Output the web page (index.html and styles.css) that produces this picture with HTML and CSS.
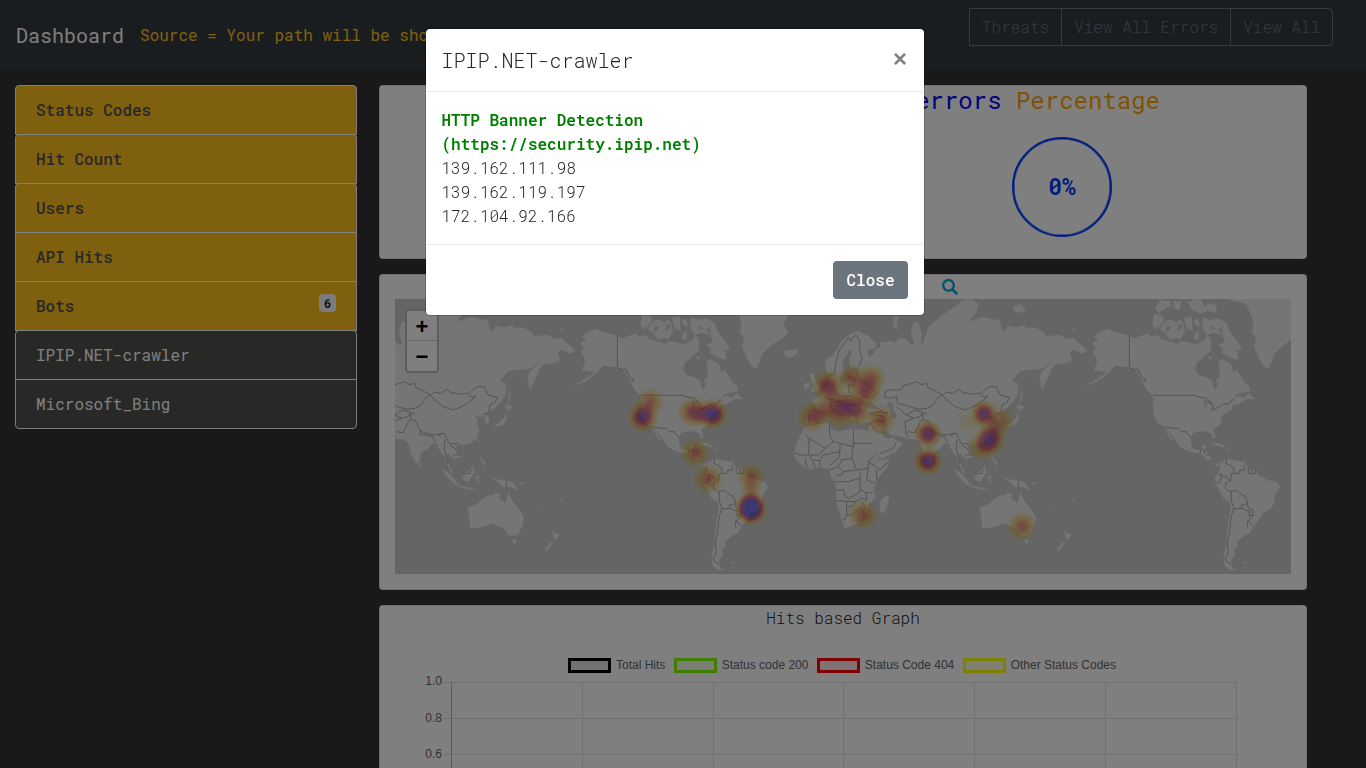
FILE: index.html
```html
<!DOCTYPE html>
<html lang="en">
<head>
<meta charset="utf-8">
<title>Dashboard</title>
<link rel="stylesheet" href="styles.css">
</head>
<body>
<nav class="navbar">
  <span class="brand">Dashboard</span>
  <span class="source">Source = Your path will be shown here</span>
  <div class="btn-group">
    <button>Threats</button><button>View All Errors</button><button>View All</button>
  </div>
</nav>
<div class="layout">
  <aside class="sidebar">
    <div class="item">Status Codes</div>
    <div class="item">Hit Count</div>
    <div class="item">Users</div>
    <div class="item">API Hits</div>
    <div class="item">Bots<span class="badge">6</span></div>
    <div class="item sub">IPIP.NET-crawler</div>
    <div class="item sub">Microsoft_Bing</div>
  </aside>
  <main class="content">
    <section class="card summary">
      <h4><span class="blue">errors</span> <span class="orange">Percentage</span></h4>
      <div class="ring">0%</div>
    </section>
    <section class="card map-card">
      <div class="map-head">
        <svg class="search" viewBox="0 0 16 16"><circle cx="6.5" cy="6.4" r="5.3" fill="none" stroke="currentColor" stroke-width="2.3"/><path d="M10.4 10.4 15.2 15.2" stroke="currentColor" stroke-width="2.8"/></svg>
      </div>
      <div class="map">
        <svg width="896" height="275" viewBox="0 0 896 275">
          <defs>
            <radialGradient id="dot"><stop offset="0" stop-opacity="1"/><stop offset=".25" stop-opacity=".85"/><stop offset=".5" stop-opacity=".55"/><stop offset=".75" stop-opacity=".22"/><stop offset="1" stop-opacity="0"/></radialGradient>
            <filter id="heat" x="0" y="0" width="896" height="275" filterUnits="userSpaceOnUse" color-interpolation-filters="sRGB">
              <feColorMatrix values="0 0 0 1 0  0 0 0 1 0  0 0 0 1 0  0 0 0 1 0"/>
              <feComponentTransfer>
                <feFuncR type="table" tableValues=".9 .92 .92 .85 .62 .3 .1"/>
                <feFuncG type="table" tableValues=".78 .68 .48 .08 .03 .08 .1"/>
                <feFuncB type="table" tableValues="0 0 0 .08 .3 .7 .85"/>
                <feFuncA type="table" tableValues="0 .32 .44 .5 .54 .57 .58"/>
              </feComponentTransfer>
            </filter>
            <g id="americas">
              <g class="land">
                <path d="M52 118 75 125 118 137 135 145 150 138 175 130 182 138 205 135 215 148 235 152 260 160 280 152 300 158 320 165 330 155 345 150 352 132 365 160 360 185 345 197 335 207 320 218 316 240 325 255 350 262 365 270 370 290 378 300 383 285 378 270 390 262 388 240 385 215 400 208 425 225 430 245 443 240 445 248 455 262 465 280 480 292 478 305 455 308 440 312 432 320 452 318 460 325 478 310 494 327 470 328 440 345 430 342 425 358 412 365 400 375 392 390 395 398 380 412 370 420 377 445 370 445 363 430 345 424 330 424 310 428 303 440 303 462 312 478 330 480 337 466 348 465 345 480 342 486 362 492 363 512 372 525 385 519 392 522 380 530 365 520 355 512 345 502 330 490 315 488 290 483 270 470 262 458 245 435 230 415 224 410 240 435 253 455 240 445 220 410 205 400 193 380 189 350 190 320 175 305 160 280 155 265 135 240 118 232 100 230 75 228 60 245 45 258 20 275-20 291 30 262 50 245 35 243 15 242 12 235 22 220 15 195 5 183 18 178 8 158 25 148 10 140 28 128Z"/>
                <path d="M390 520 410 505 440 512 465 515 475 535 500 540 505 555 520 562 530 570 560 575 571 590 555 615 550 645 540 658 520 668 510 685 492 708 480 730 465 735 455 745 440 755 445 770 432 778 435 795 422 812 432 830 442 838 425 842 405 830 400 800 408 770 412 720 418 680 422 640 400 625 388 600 375 578 375 560 388 545Z"/>
                <path d="M415-20 420 30 455 38 470 45 485 80 490 110 484 125 498 145 492 170 505 200 520 228 533 236 545 215 550 195 580 165 605 150 632 128 617 105 627 80 640 40 650-20Z"/>
                <path d="M192 72 215 74 222 90 210 110 195 118 187 105ZM210 120 222 95 240 88 262 97 270 88 280 102 285 125 270 150 258 143 240 150 225 130ZM195 50 205 40 215 28 228 34 240 30 245 50 232 52 220 60 205 70ZM250 30 262 36 275 32 268 60 252 55ZM282 85 305 78 308 120 292 118ZM290 30 300 38 310 28 330 25 345 50 355 40 380 45 378 68 355 64 330 70 305 60ZM312 90 325 85 330 110 318 108ZM340 82 360 90 385 85 410 100 420 125 450 165 458 182 440 178 445 210 425 205 395 190 400 175 385 165 405 155 395 135 370 128 350 135 336 110ZM352 200 368 202 362 210ZM315 130 328 125 325 150 310 148Z"/>
                <path d="M360 460 380 457 410 470 395 472ZM410 475 430 478 412 481ZM458 818 474 814 462 822ZM558 832 568 840 560 836Z"/>
                <path d="M618 187 612 183 620 181 628 184 632 178 645 180 655 178 661 188 652 196 640 202 622 199Z"/>
              </g>
              <path class="sea" d="M342 330 360 334 368 345 350 340 345 360ZM268 100 278 110 262 125ZM228 108 245 112 230 128ZM360 105 380 118 365 120ZM225 92 232 104 222 100ZM395 110 400 140 386 118Z"/>
              <path class="line" d="M118 137V232L135 240 143 237 155 260 167 270 162 278M190 316H313L325 321 350 325 365 340 370 350 366 360 385 352 400 343 420 340 426 328 433 335M222 410 240 414 265 415 275 425 288 425 302 443M330 490 332 478 342 478 343 490 352 497 362 492M355 510 366 515M410 505 408 520 430 532 433 550 445 552 450 540 463 540 462 525M475 535 474 550 497 550 496 538M485 535 486 548M375 575 385 580 395 565 388 552M390 553 410 562 422 572 425 550 433 550M422 572 408 578 406 595 420 605 440 600 450 610 465 620 475 640 455 645 455 655 432 657 424 632 424 605M432 657 425 675 418 730 412 760 415 785 406 805 412 818 430 825V838M455 655 480 665 476 678 490 675 488 660 475 655 472 640M490 675 473 695 472 712M473 692 490 708"/>
            </g>
            <g id="oldworld">
              <g class="land">
                <path d="M235 122 265 138 288 160 287 176 262 180 266 200 280 194 287 178 303 170 298 158 315 155 330 152 345 158 355 145 375 145 398 168 402 158 392 130 402 95 416 97 425 130 422 170 440 130 445 110 480 80 510 60 550 30 575 28 597 42 590 65 565 95 610 80 640 88 660 90 663 108 675 125 680 112 690 108 710 112 730 105 740 114 765 112 780 120 795 128 797 140 820 136 840 134 858 146 880 145 900 162 922 180 910 192 880 180 870 190 878 210 850 222 830 222 815 235 805 260 785 302 778 265 785 245 817 214 790 235 770 238 720 243 695 275 715 280 712 318 692 345 665 366 650 370 665 385 660 402 652 395 649 378 636 380 621 378 630 390 626 400 634 420 628 445 606 460 584 466 571 462 561 470 574 490 578 505 561 515 551 505 541 490 534 495 541 520 556 550 549 550 536 520 531 500 521 490 511 475 506 460 494 460 481 475 458 490 456 515 444 522 431 495 421 460 408 450 381 445 345 437 330 432 318 420 302 415 310 440 325 448 338 440 347 450 370 460 345 487 302 508 285 480 262 435 265 420 270 397 240 398 232 385 235 370 225 372 225 392 215 390 205 375 190 355 180 350 203 375 198 387 175 360 160 355 145 362 130 368 120 385 110 393 98 404 77 400 78 385 80 365 108 366 108 345 95 330 118 322 128 308 145 287 150 260 160 255 172 262 160 248 142 252 135 230 137 210 160 195 180 160 205 135Z"/>
                <path d="M75 408 100 405 150 395 152 415 175 425 205 418 215 417 260 420 265 440 285 480 300 510 330 508 320 535 290 570 282 595 288 620 265 645 258 670 235 700 195 715 185 690 170 640 168 600 165 575 152 560 150 540 130 532 95 537 70 530 45 505 43 485 50 460 65 430Z"/>
                <path d="M303 630 325 612 328 625 315 668 302 668 299 650ZM90 252 104 250 102 262 110 278 120 295 115 304 90 306 100 292 95 275ZM74 282 86 276 89 292 72 298ZM338 80 350 78 358 78 350 100 355 120 342 112Z"/>
                <path d="M599 655 612 648 631 640 640 628 651 625 660 614 671 618 676 611 696 610 694 625 711 640 717 625 721 605 734 635 751 655 768 680 764 705 751 735 735 738 721 735 708 718 701 712 691 710 676 700 641 712 608 715 604 690ZM731 748 748 750 739 765ZM853 717 861 730 875 735 861 752 856 742ZM856 752 841 780 826 782 846 760Z"/>
                <path d="M711 370 718 385 706 405 673 414 691 398 708 385ZM711 345 736 350 718 362ZM721 285 727 320 722 345ZM521 535 541 548 571 582 561 585 536 560ZM566 585 606 593 626 598 606 599 571 590ZM581 555 606 540 616 525 618 550 601 575 584 568ZM624 560 640 556 630 567 637 580 627 572 625 582ZM671 562 691 570 711 568 736 580 754 602 731 592 706 592 686 575ZM628 480 636 500 651 515 651 530 638 510ZM628 448 634 450 630 460ZM456 515 464 528 456 530ZM582 470 588 468 585 476ZM700 48 722 42 740 60 718 70 700 62ZM875 117 890 117 882 124ZM755 580 772 574 765 583ZM812 642 826 656 820 653ZM875 630 884 627 878 635Z"/>
              </g>
              <path class="sea" d="M182 278 178 262 190 250 190 230 186 212 200 195 208 180 217 183 208 205 211 232 238 235 215 243 208 265 195 282ZM238 345 242 328 260 335 270 330 275 340 300 358 275 356 255 350ZM325 335 342 340 338 355 350 375 345 388 332 382 333 362 320 350Z"/>
              <path class="line" d="M163 248 168 215 178 180 205 143 215 155M212 150 228 135 238 150 240 185 246 205 235 232M220 240 232 245 234 265 250 275 270 290 290 310 275 325 255 320 240 330M205 262 225 270 222 285 205 285M160 285 168 312 190 320 215 318 240 330 235 345 205 345 190 335 165 330 145 325 128 318M205 285 208 310M110 365 130 368M90 367 86 400M150 325 155 350M155 335 185 340M170 350 190 345 215 370M314 322 315 305 330 299 350 300 365 300 368 288 388 282 410 275 425 284 440 280 445 295 460 300 487 315 472 326 460 345 440 355 415 358 395 352 375 345 352 340 350 320 330 325 314 322M487 315 500 307 520 310 535 298 550 308 575 312 600 310 612 322 624 318 610 330 592 345 555 360 525 350 500 330 487 315M605 310 625 290 650 290 660 315 688 322 680 340 665 345 665 365 645 375M350 350 375 372 400 385 420 380 430 368 405 360 380 375M400 385 375 395 378 430 383 440M383 425 405 428 415 410 420 395 430 388 425 375 440 370M430 388 445 395 450 410 460 425 495 435 530 430 535 445 545 462 570 460M456 422 455 432 495 440 500 455M510 440 520 430M530 450 530 480 540 520M545 465 560 475 575 495 555 495M552 500 560 510 575 505M270 370 300 365 320 370M265 372 310 378 312 398 320 415M312 398 290 390 270 400M270 400 290 425 315 428M300 360 310 370 325 368M300 490 340 475 348 458M583 553 605 550 612 540M715 570V597M75 432 88 445 135 475 160 455 150 440 148 395M88 445 85 495 60 495 45 488M135 475 115 495 90 495 95 510 120 512 130 495 180 485 180 460 160 455M180 460 220 470V418M220 460H275M220 470 215 505 230 540 265 535 265 515 285 495M180 485 175 505 150 525M150 540 175 530 185 510 215 505M175 530 190 545 230 540M168 555 185 555 190 545M165 575 205 575 240 565 240 545M265 535 260 570 285 580M240 565 240 600 265 610 280 605M165 600 190 600 195 620 205 625 235 610 240 600M165 632 225 635 245 625 260 630 258 610M200 635 200 675 195 690 188 688M225 635 215 650 202 650M200 675 220 675 240 655 255 655 248 635M245 655 252 670M290 540 290 570M265 515 300 540 325 515M75 505 80 530M100 515 105 535M120 512 120 530M230 688 236 684 240 690 234 695Z"/>
            </g>
          </defs>
          <g transform="translate(385 -9) scale(.33333)">
            <use href="#oldworld" x="-1536"/>
            <use href="#americas" x="-606"/>
            <use href="#oldworld"/>
            <use href="#americas" x="930"/>
          </g>
          <g filter="url(#heat)" fill="url(#dot)">
            <circle cx="248" cy="118" r="16" opacity=".85"/><circle cx="255" cy="103" r="15" opacity=".45"/>
            <circle cx="298" cy="113" r="16" opacity=".6"/><circle cx="306" cy="116" r="12" opacity=".4"/><circle cx="317.5" cy="115" r="16" opacity=".95"/>
            <circle cx="300" cy="154" r="16" opacity=".48"/><circle cx="313" cy="180" r="16" opacity=".48"/><circle cx="356" cy="178" r="15" opacity=".45"/><circle cx="356" cy="191" r="11" opacity=".3"/>
            <circle cx="356" cy="205" r="14"/><circle cx="356" cy="213" r="14"/><circle cx="352" cy="209" r="14" opacity=".6"/><circle cx="360" cy="209" r="14" opacity=".6"/>
            <circle cx="433" cy="87" r="17" opacity=".65"/><circle cx="457" cy="79" r="15" opacity=".48"/><circle cx="476" cy="80" r="16" opacity=".48"/><circle cx="470" cy="93" r="17" opacity=".55"/>
            <circle cx="417" cy="118" r="16" opacity=".52"/><circle cx="427" cy="112" r="15" opacity=".35"/><circle cx="440" cy="105" r="17" opacity=".45"/><circle cx="453" cy="107" r="15" opacity=".65"/><circle cx="463" cy="112" r="15" opacity=".5"/><circle cx="445" cy="116" r="16" opacity=".35"/>
            <circle cx="486" cy="121" r="16" opacity=".48"/><circle cx="533" cy="135" r="15" opacity=".8"/><circle cx="533" cy="162" r="15" opacity=".88"/><circle cx="468" cy="216" r="16" opacity=".48"/>
            <circle cx="589" cy="115" r="15" opacity=".8"/><circle cx="595" cy="141" r="16" opacity=".8"/><circle cx="587" cy="147" r="16" opacity=".42"/><circle cx="597" cy="132" r="14" opacity=".35"/><circle cx="606" cy="122" r="15" opacity=".38"/><circle cx="572" cy="124" r="13" opacity=".12"/><circle cx="627" cy="227.5" r="16" opacity=".47"/>
          </g>
        </svg>
        <div class="zoom"><span>+</span><span>−</span></div>
      </div>
    </section>
    <section class="card chart-card">
      <div class="chart-title">Hits based Graph</div>
      <div class="legend">
        <span><i class="k"></i>Total Hits</span><span><i class="g"></i>Status code 200</span><span><i class="r"></i>Status Code 404</span><span><i class="y"></i>Other Status Codes</span>
      </div>
      <svg class="plot" width="860" height="94" viewBox="0 0 860 94">
        <path class="grid" d="M63 8.5H857.5M63 44.5H857.5M63 80.5H857.5M202.5 8V94M333.5 8V94M463.5 8V94M594.5 8V94M725.5 8V94M856.5 8V94"/>
        <path class="axis" d="M71.5 8V94"/>
        <text x="62" y="11">1.0</text><text x="62" y="48">0.8</text><text x="62" y="84">0.6</text>
      </svg>
    </section>
  </main>
</div>
<div class="backdrop">
  <div class="modal">
    <div class="modal-head"><span>IPIP.NET-crawler</span><b class="x">×</b></div>
    <div class="modal-body"><b>HTTP Banner Detection<br>(https://security.ipip.net)</b><br>139.162.111.98<br>139.162.119.197<br>172.104.92.166</div>
    <div class="modal-foot"><button>Close</button></div>
  </div>
</div>
</body>
</html>
```
FILE: styles.css
```css
* { box-sizing: border-box; }
body { margin: 0; height: 768px; overflow: hidden; background: #333; color: #212529; font: 360 16px/24px "Roboto Mono", "DejaVu Sans Mono", monospace; }
button { font: inherit; }
.navbar { height: 70px; padding: 8px 33px 0 16px; background: #343a40; display: flex; align-items: flex-start; white-space: nowrap; }
.brand { color: #fff; font-size: 20px; line-height: 30px; margin: 12px 16px 0 0; font-weight: 400; }
.source { color: #ffc120; margin-top: 15px; font-weight: 400; }
.btn-group { margin-left: auto; display: flex; }
.btn-group button { height: 38px; padding: 0 12px; border: 1px solid #6c757d; background: none; color: #6c757d; margin-left: -1px; }
.btn-group button:last-child { border-radius: 0 4px 4px 0; }
.layout { display: flex; gap: 22px; padding: 15px 59px 0 15px; }
.sidebar { width: 342px; }
.item { height: 50px; margin-bottom: -1px; padding: 12px 20px; border: 1px solid #fff; background: #ffc11f; color: #50504e; font-weight: 550; display: flex; justify-content: space-between; }
.item:first-child, .item:nth-child(2), .item:nth-child(3), .item:nth-child(6) { border-radius: 4px 4px 0 0; }
.item:last-child { border-radius: 0 0 4px 4px; }
.item.sub { background: #50504e; color: #fff; font-weight: 400; }
.badge { width: 17px; height: 18px; background: #f8f9fa; color: #212529; border-radius: 4px; font: bold 12px/19px "Roboto Mono", "DejaVu Sans Mono", monospace; text-align: center; }
.content { flex: 1; display: flex; flex-direction: column; gap: 15px; }
.card { background: #fff; border: 1px solid rgba(0,0,0,.125); border-radius: 4px; }
.summary { height: 174px; padding-right: 146px; }
.summary h4 { margin: 0; font-size: 24px; line-height: 29px; font-weight: 380; text-align: right; }
.blue { color: #00f; }
.orange { color: orange; }
.ring { width: 100px; height: 100px; margin: 22px 48px 0 auto; border: 2px solid #003cff; box-shadow: inset 0 0 0 .5px #003cff; border-radius: 50%; color: #0038ff; font-size: 23px; font-weight: 600; line-height: 95px; text-align: center; }
.map-card { height: 316px; padding: 0 15px; }
.map-head { height: 24px; padding: 4px 0 0 547px; }
.search { width: 16px; height: 16px; display: block; color: #00a8e0; }
.map { position: relative; height: 275px; background: #cacaca; }
.map > svg { display: block; }
.land { fill: #eaeaea; }
.sea { fill: #cacaca; }
.line { fill: none; stroke: #909090; stroke-width: 2.2; stroke-linejoin: round; }
.zoom { position: absolute; left: 10px; top: 10px; width: 34px; border: 2px solid #bbb; border-radius: 4px; background: #fff; }
.zoom span { display: block; height: 29px; font: bold 22px/31px "Liberation Sans", sans-serif; text-align: center; color: #000; }
.zoom span + span { height: 31px; border-top: 1px solid #ccc; }
.chart-card { height: 163px; border-bottom: 0; border-radius: 4px 4px 0 0; overflow: hidden; }
.chart-title { text-align: center; }
.legend { margin-top: 27px; display: flex; justify-content: center; gap: 8.4px; font: 12px/16px "Liberation Sans", Arial, sans-serif; color: #666; padding-right: 2px; }
.legend span { display: flex; gap: 5px; }
.legend i { width: 43px; height: 15px; margin-top: 1px; border: 3px solid; }
.legend .k { border-color: #000; background: #e5e5e5; }
.legend .g { border-color: #7fff00; background: #f2ffe5; }
.legend .r { border-color: red; background: #ffe5e5; }
.legend .y { border-color: #ff0; background: #ffffe5; }
.plot { display: block; margin-top: 1px; }
.grid { fill: none; stroke: #e0e0e0; }
.axis { stroke: #b5b5b5; }
.plot text { font: 12px "Liberation Sans", Arial, sans-serif; fill: #666; text-anchor: end; }
.backdrop { position: fixed; inset: 0; background: rgba(0,0,0,.5); padding-top: 28px; }
.modal { width: 500px; margin-left: 425px; background: #fff; border: 1px solid rgba(0,0,0,.2); border-radius: 5px; background-clip: padding-box; }
.modal-head { height: 63px; padding: 16px 17px 16px 15.5px; border-bottom: 1px solid #e9ecef; display: flex; justify-content: space-between; font-size: 20px; line-height: 30px; }
.x { font: bold 24px/27px "Liberation Sans", sans-serif; color: #7f7f7f; }
.modal-body { padding: 16px 15.5px; }
.modal-body b { color: green; font-weight: 600; }
.modal-foot { height: 71px; border-top: 1px solid #e9ecef; padding: 16px 16px 0; display: flex; justify-content: flex-end; }
.modal-foot button { width: 75px; height: 38px; padding: 0; border: 0; border-radius: 4px; background: #6c757d; color: #fff; font-weight: 500; }
```
